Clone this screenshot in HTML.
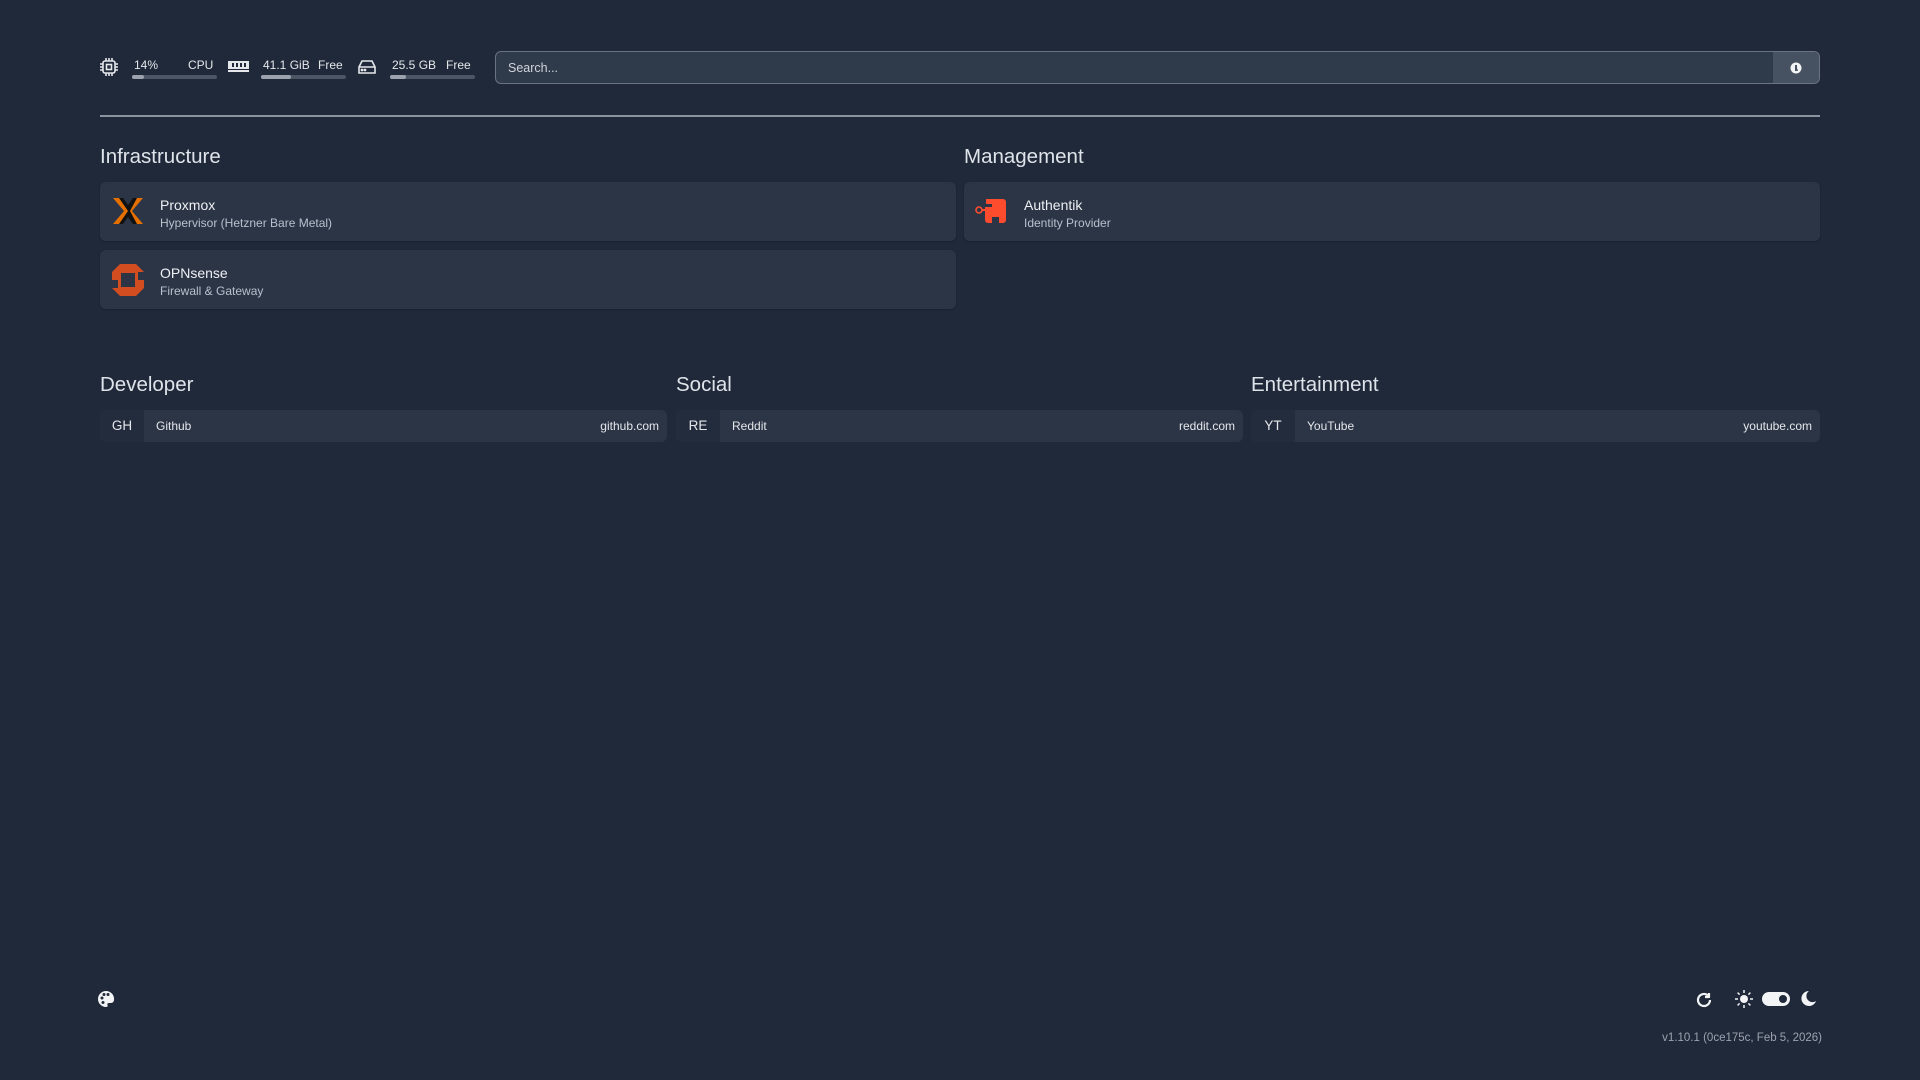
<!DOCTYPE html>
<html><head><meta charset="utf-8"><style>
*{box-sizing:border-box;margin:0;padding:0}
body{width:1920px;height:1080px;background:#1f2939;font-family:"Liberation Sans",sans-serif;color:#e5e7eb;position:relative;overflow:hidden}
.abs{position:absolute}
.stat{position:absolute;top:58px;font-size:12px;color:#e5e7eb}
.bar{position:absolute;top:75px;height:4px;border-radius:2px;background:#4b5563}
.bar i{display:block;height:4px;border-radius:2px;background:#9ca3af}
.search{left:495px;top:51px;width:1325px;height:33px;border:1px solid #6b7280;border-radius:6px;background:#2f3a4b;overflow:hidden}
.search span{position:absolute;left:12px;top:9px;font-size:12.5px;color:#d1d5db}
.search b{position:absolute;right:0;top:0;width:46px;height:33px;background:#465162}
h2{position:absolute;font-weight:400;font-size:20.5px;color:#dfe3ea}
.card{position:absolute;background:#2b3546;border-radius:6px;height:59px;box-shadow:0 1px 2px rgba(0,0,0,.2)}
.card .t{position:absolute;left:60px;top:15px;font-size:14px;color:#eef0f3}
.card .s{position:absolute;left:60px;top:34px;font-size:12px;color:#b8c0cc}
.card svg{position:absolute;left:11px;top:13px}
.row{position:absolute;top:410px;height:32px;border-radius:6px;background:#2b3546;overflow:hidden;font-size:12px}
.row .ab{position:absolute;left:0;top:0;width:44px;height:32px;background:#222c3c;text-align:center;line-height:32px;font-size:13.5px;color:#e5e7eb}
.row .n{position:absolute;left:56px;top:9px;color:#e5e7eb}
.row .u{position:absolute;right:8px;top:9px;color:#e5e7eb}
</style></head><body>
<svg class="abs" style="left:99px;top:57px" width="20" height="20" viewBox="0 0 20 20" fill="none" stroke="#e5e7eb" stroke-width="1.6"><rect x="4" y="4" width="12" height="12" rx="2"/><rect x="7.5" y="7.5" width="5" height="5"/><path d="M7 1v3M10 1v3M13 1v3M7 16v3M10 16v3M13 16v3M1 7h3M1 10h3M1 13h3M16 7h3M16 10h3M16 13h3"/></svg>
<div class="stat" style="left:134px">14%</div><div class="stat" style="left:188px">CPU</div>
<div class="bar" style="left:132px;width:85px"><i style="width:12px"></i></div>
<svg class="abs" style="left:228px;top:61px" width="21" height="12" viewBox="0 0 21 12"><rect x="0" y="0" width="21" height="8" fill="#e5e7eb"/><rect x="4" y="2" width="2" height="4" fill="#1f2939"/><rect x="8" y="2" width="2" height="4" fill="#1f2939"/><rect x="12" y="2" width="2" height="4" fill="#1f2939"/><rect x="16" y="2" width="2" height="4" fill="#1f2939"/><rect x="0" y="9" width="21" height="2" fill="#e5e7eb"/></svg>
<div class="stat" style="left:263px">41.1 GiB</div><div class="stat" style="left:318px">Free</div>
<div class="bar" style="left:261px;width:85px"><i style="width:30px"></i></div>
<svg class="abs" style="left:357px;top:59px" width="20" height="16" viewBox="0 0 20 16" fill="none" stroke="#e5e7eb" stroke-width="1.6"><path d="M2 8L5 2h10l3 6v6H2z M2 8h16"/><circle cx="5" cy="11" r=".6" fill="#e5e7eb"/><circle cx="8" cy="11" r=".6" fill="#e5e7eb"/></svg>
<div class="stat" style="left:392px">25.5 GB</div><div class="stat" style="left:446px">Free</div>
<div class="bar" style="left:390px;width:85px"><i style="width:16px"></i></div>
<div class="abs search"><span>Search...</span><b><svg style="position:absolute;left:17px;top:10px" width="12" height="12" viewBox="0 0 12 12"><circle cx="6" cy="6" r="5.5" fill="#f3f4f6"/><path d="M5 3h2v3l1 3H5z" fill="#465162"/></svg></b></div>
<div class="abs" style="left:100px;top:115px;width:1720px;height:2px;background:#8b93a0"></div>

<h2 style="left:100px;top:145px">Infrastructure</h2>
<h2 style="left:964px;top:145px">Management</h2>
<div class="card" style="left:100px;top:182px;width:856px"><svg width="34" height="32" viewBox="0 0 34 32"><path d="M2 3h8l7 9 7-9h8L21 16l11 13h-8l-7-9-7 9H2l11-13z" fill="#e57000"/><path d="M8 3h4l5 7 5-7h4L19 16l7 13h-4l-5-7-5 7H8l9-13z" fill="#111"/></svg><div class="t">Proxmox</div><div class="s">Hypervisor (Hetzner Bare Metal)</div></div>
<div class="card" style="left:100px;top:250px;width:856px"><svg width="34" height="34" viewBox="0 0 34 34"><path d="M9 1h16l8 8v16l-8 8H9L1 25V9z" fill="#d24d1f"/><rect x="10" y="10" width="14" height="14" fill="#2b3546"/><path d="M1 17h6v8H1z" fill="#2b3546"/><path d="M27 9h6v8h-6z" fill="#2b3546"/></svg><div class="t">OPNsense</div><div class="s">Firewall &amp; Gateway</div></div>
<div class="card" style="left:964px;top:182px;width:856px"><svg width="34" height="32" viewBox="0 0 34 32"><circle cx="4" cy="15" r="3" fill="none" stroke="#fd4b2d" stroke-width="1.6"/><path d="M7 15h5" stroke="#fd4b2d" stroke-width="2"/><path d="M11 4h17a3 3 0 0 1 3 3v18a3 3 0 0 1-3 3h-4v-6h-7v6h-4a3 3 0 0 1-3-3V12h7V9h-6z" fill="#fd4b2d"/></svg><div class="t">Authentik</div><div class="s">Identity Provider</div></div>

<h2 style="left:100px;top:373px">Developer</h2>
<h2 style="left:676px;top:373px">Social</h2>
<h2 style="left:1251px;top:373px">Entertainment</h2>
<div class="row" style="left:100px;width:567px"><div class="ab">GH</div><div class="n">Github</div><div class="u">github.com</div></div>
<div class="row" style="left:676px;width:567px"><div class="ab">RE</div><div class="n">Reddit</div><div class="u">reddit.com</div></div>
<div class="row" style="left:1251px;width:569px"><div class="ab">YT</div><div class="n">YouTube</div><div class="u">youtube.com</div></div>

<svg class="abs" style="left:97px;top:990px" width="18" height="18" viewBox="0 0 18 18"><path d="M9 1a8 8 0 0 0 0 16c1.5 0 2-1 1.5-2s0-2 1.5-2h2a3 3 0 0 0 3-3A8 8 0 0 0 9 1z" fill="#f3f4f6"/><circle cx="5" cy="8" r="1.5" fill="#1f2939"/><circle cx="7" cy="4.5" r="1.5" fill="#1f2939"/><circle cx="11" cy="4.5" r="1.5" fill="#1f2939"/><circle cx="6" cy="12.5" r="1.5" fill="#1f2939"/></svg>
<svg class="abs" style="left:1695px;top:991px" width="18" height="18" viewBox="0 0 18 18" fill="none" stroke="#f3f4f6" stroke-width="2.2"><path d="M15 9a6 6 0 1 1-2-4.5"/><path d="M14 2v4h-4" stroke-linejoin="round"/></svg>
<svg class="abs" style="left:1735px;top:990px" width="18" height="18" viewBox="0 0 18 18"><circle cx="9" cy="9" r="4" fill="#f3f4f6"/><path d="M9 0v3M9 15v3M0 9h3M15 9h3M2.6 2.6l2 2M13.4 13.4l2 2M2.6 15.4l2-2M13.4 4.6l2-2" stroke="#f3f4f6" stroke-width="1.5"/></svg>
<div class="abs" style="left:1762px;top:992px;width:28px;height:14px;border-radius:7px;background:#f3f4f6"><div style="position:absolute;right:3px;top:3px;width:8px;height:8px;border-radius:4px;background:#1f2939"></div></div>
<svg class="abs" style="left:1799px;top:990px" width="18" height="18" viewBox="0 0 18 18"><path d="M10 1a7.5 7.5 0 1 0 7 10A6 6 0 0 1 10 1z" fill="#f3f4f6"/></svg>
<div class="abs" style="right:98px;top:1032px;font-size:11.5px;color:#9ca3af">v1.10.1 (0ce175c, Feb 5, 2026)</div>
</body></html>
